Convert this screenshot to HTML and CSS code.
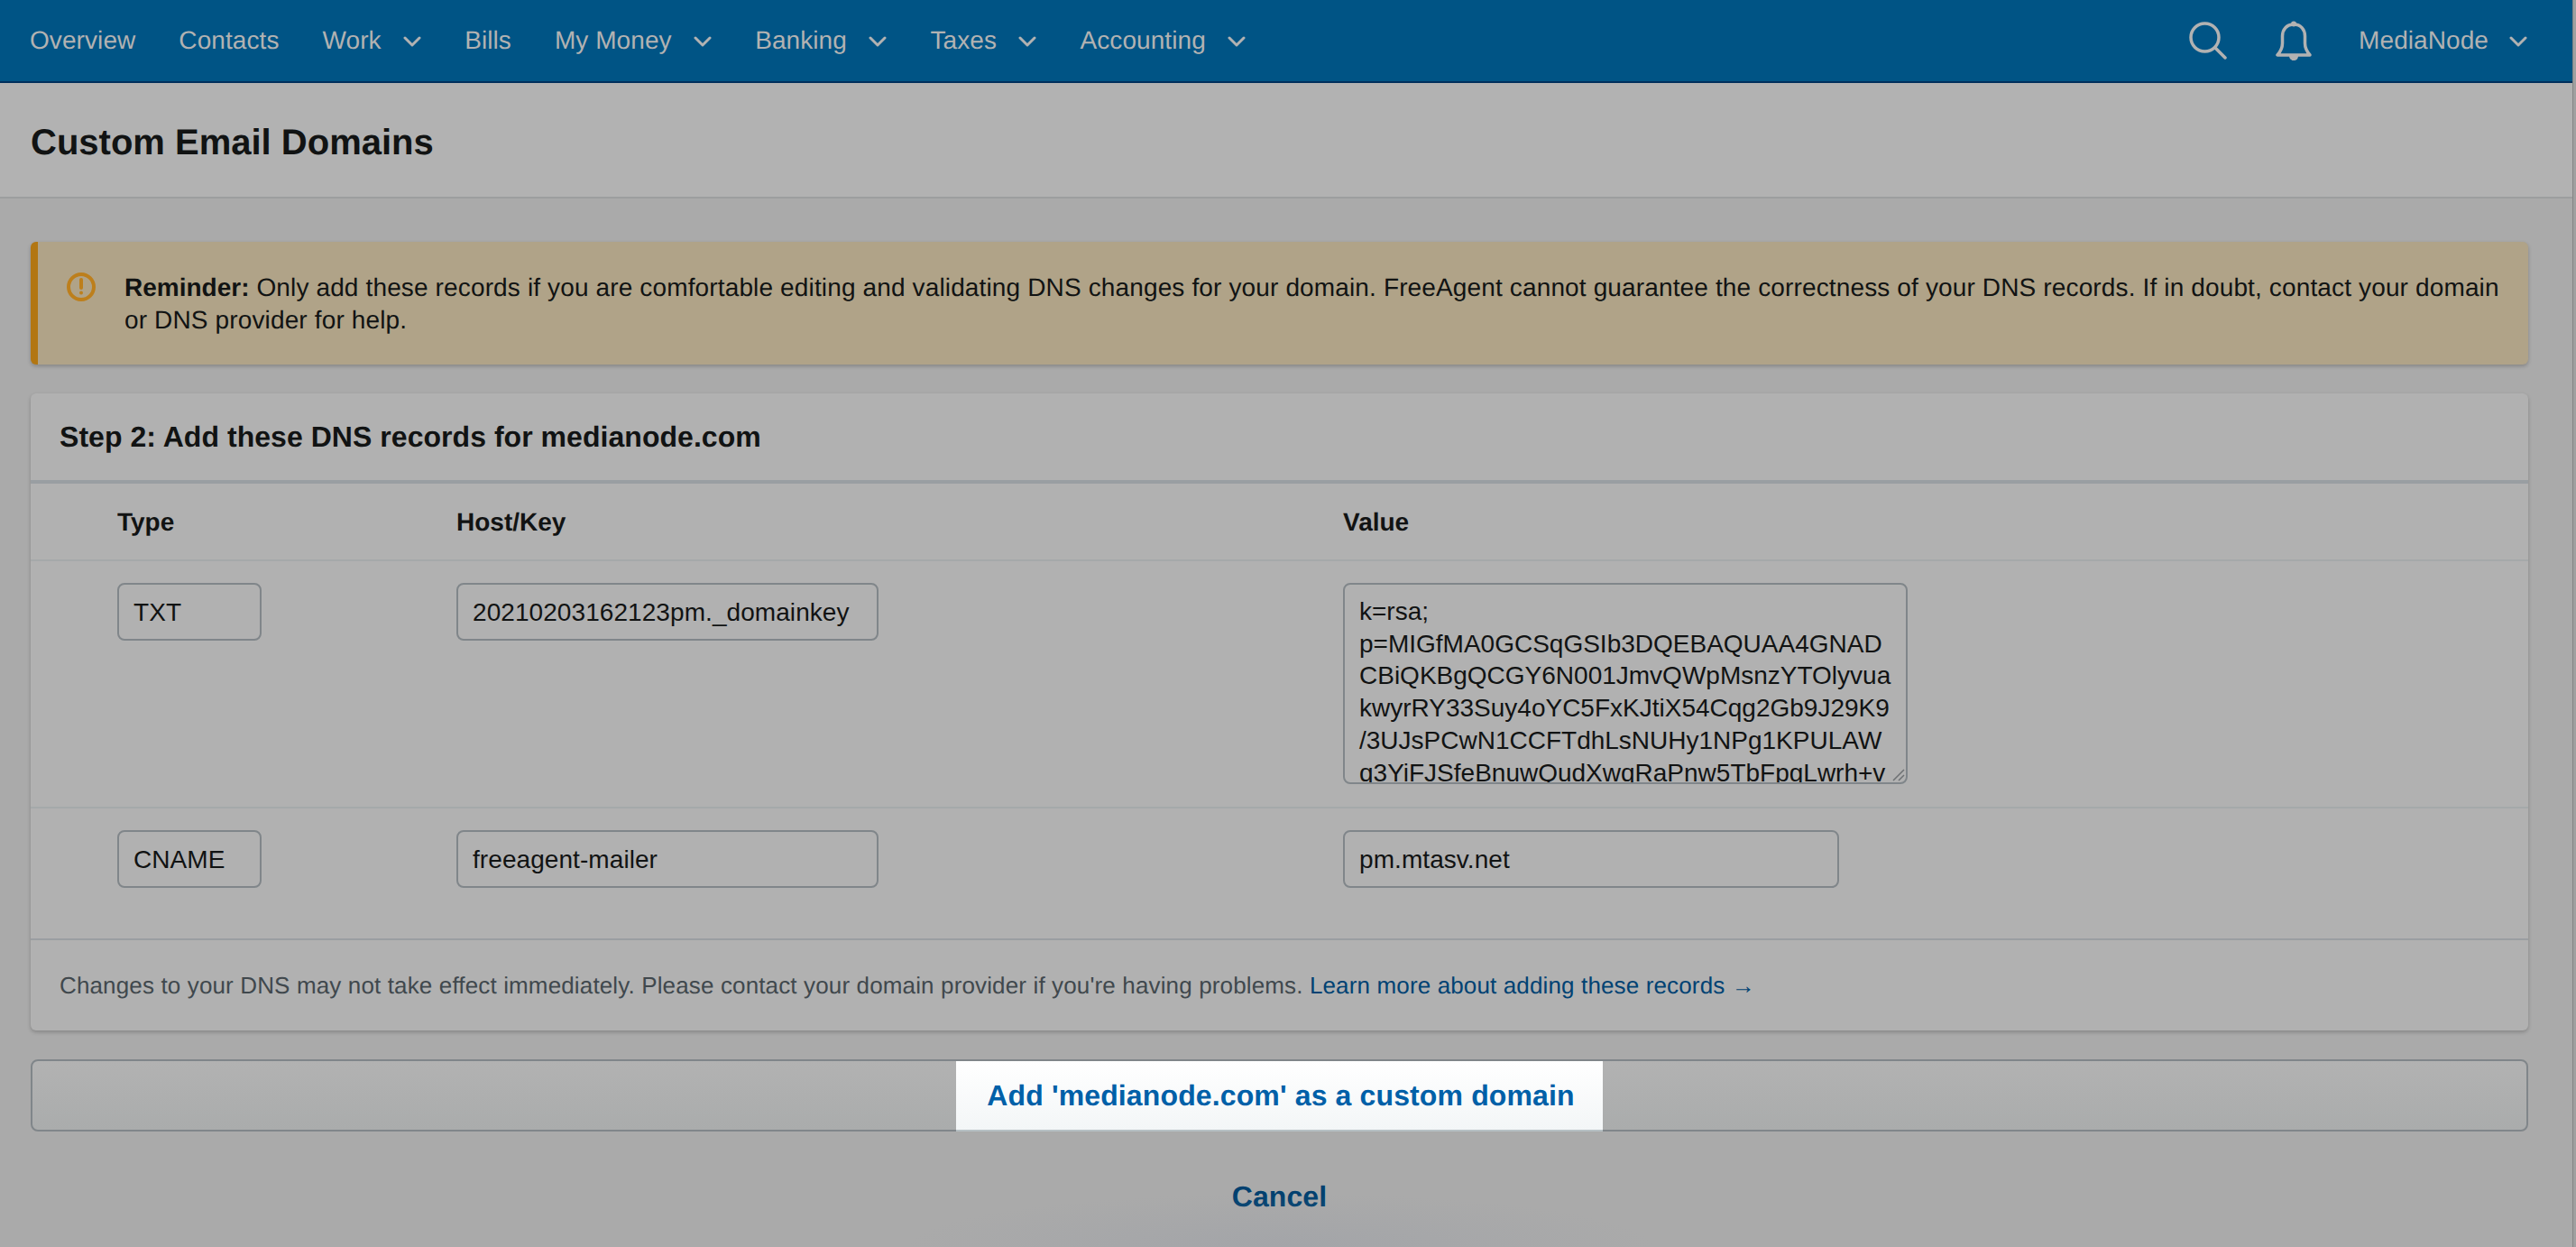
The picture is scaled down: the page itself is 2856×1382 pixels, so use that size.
FILE: index.html
```html
<!DOCTYPE html>
<html lang="en">
<head>
<meta charset="utf-8">
<title>Custom Email Domains</title>
<link rel="stylesheet" href="styles.css">
</head>
<body>
<div class="page">
  <nav class="nav">
    <a class="nav-link">Overview</a>
    <a class="nav-link">Contacts</a>
    <a class="nav-link">Work <svg class="chev" viewBox="0 0 20 12"><path d="M2 2l8 8 8-8"/></svg></a>
    <a class="nav-link">Bills</a>
    <a class="nav-link">My Money <svg class="chev" viewBox="0 0 20 12"><path d="M2 2l8 8 8-8"/></svg></a>
    <a class="nav-link">Banking <svg class="chev" viewBox="0 0 20 12"><path d="M2 2l8 8 8-8"/></svg></a>
    <a class="nav-link">Taxes <svg class="chev" viewBox="0 0 20 12"><path d="M2 2l8 8 8-8"/></svg></a>
    <a class="nav-link">Accounting <svg class="chev" viewBox="0 0 20 12"><path d="M2 2l8 8 8-8"/></svg></a>
    <div class="nav-right">
      <svg class="icon-search" viewBox="0 0 42 42"><circle cx="17.5" cy="17.5" r="15.5"/><path d="M29 29l11 11"/></svg>
      <svg class="icon-bell" viewBox="0 0 40 44"><path d="M20 4c-8 0-12.500 6-12.500 13v8c0 5-2 9-5.500 13h36c-3.500-4-5.500-8-5.500-13v-8C32.500 10 28 4 20 4z"/><circle class="fill" cx="20" cy="3.500" r="3"/><path class="fill" d="M15 39h10c0 3-2 5-5 5s-5-2-5-5z"/></svg>
      <a class="nav-link nav-user">MediaNode <svg class="chev" viewBox="0 0 20 12"><path d="M2 2l8 8 8-8"/></svg></a>
    </div>
  </nav>
  <header class="page-head"><h1 class="page-title">Custom Email Domains</h1></header>
  <main class="content">
    <section class="alert">
      <svg class="alert-icon" viewBox="0 0 32 32"><circle cx="16" cy="16" r="14"/><path d="M16 8v9"/><circle class="dot" cx="16" cy="22.500" r="2"/></svg>
      <p class="alert-text"><strong class="alert-lead">Reminder:</strong> Only add these records if you are comfortable editing and validating DNS changes for your domain. FreeAgent cannot guarantee the correctness of your DNS records. If in doubt, contact your domain or DNS provider for help.</p>
    </section>
    <section class="card">
      <h2 class="card-title">Step 2: Add these DNS records for medianode.com</h2>
      <div class="row row-head"><div>Type</div><div>Host/Key</div><div>Value</div></div>
      <div class="row row-txt">
        <div><input class="field field-type" readonly value="TXT"></div>
        <div><input class="field field-host" readonly value="20210203162123pm._domainkey"></div>
        <div class="area-wrap"><textarea class="field field-area" readonly>k=rsa;
p=MIGfMA0GCSqGSIb3DQEBAQUAA4GNAD
CBiQKBgQCGY6N001JmvQWpMsnzYTOlyvua
kwyrRY33Suy4oYC5FxKJtiX54Cqg2Gb9J29K9
/3UJsPCwN1CCFTdhLsNUHy1NPg1KPULAW
q3YiFJSfeBnuwQudXwqRaPnw5TbFpgLwrh+v</textarea><svg class="grip" viewBox="0 0 14 14"><path d="M1 13L13 1M7 13l6-6"/></svg></div>
      </div>
      <div class="row row-cname">
        <div><input class="field field-type" readonly value="CNAME"></div>
        <div><input class="field field-host" readonly value="freeagent-mailer"></div>
        <div><input class="field field-value" readonly value="pm.mtasv.net"></div>
      </div>
      <p class="card-foot">Changes to your DNS may not take effect immediately. Please contact your domain provider if you're having problems. <a class="foot-link">Learn more about adding these records →</a></p>
    </section>
    <div class="add-btn"><span class="add-label">Add 'medianode.com' as a custom domain</span></div>
    <a class="cancel">Cancel</a>
  </main>
</div>
<div class="edge"></div>
</body>
</html>
```
FILE: styles.css
```css
* { box-sizing: border-box; }
html, body { height: 100%; }
body {
  margin: 0;
  display: flex;
  overflow: hidden;
  background: #aaaaaa;
  font-family: "Liberation Sans", Arial, sans-serif;
  color: #111313;
  text-rendering: geometricPrecision;
}
.page { flex: 1; min-width: 0; position: relative; }
.page::after {
  content: "";
  position: absolute;
  left: 1000px;
  width: 840px;
  bottom: -60px;
  height: 120px;
  background: radial-gradient(ellipse at center, rgba(150,155,165,.35), rgba(150,155,165,0) 70%);
}
.edge { width: 4px; background: #a0a0a0; border-left: 1px solid #858585; }

.nav {
  height: 92px;
  display: flex;
  align-items: center;
  gap: 48px;
  padding: 0 50px 0 33px;
  background: #005485;
  border-bottom: 2px solid #002f5c;
}
.nav-link {
  display: flex;
  align-items: center;
  gap: 24.5px;
  font-size: 28px;
  letter-spacing: .08px;
  color: #b2b2b2;
  white-space: nowrap;
}
.nav-user { gap: 23px; }
.chev { width: 20px; height: 12px; margin-top: 2px; }
.chev path { fill: none; stroke: #b2b2b2; stroke-width: 3; stroke-linecap: round; stroke-linejoin: round; }
.nav-right { margin-left: auto; display: flex; align-items: center; }
.icon-search { width: 42px; height: 42px; margin-right: 54px; }
.icon-search circle, .icon-search path { fill: none; stroke: #b2b2b2; stroke-width: 3.500; stroke-linecap: round; }
.icon-bell { width: 40px; height: 44px; margin-right: 52px; }
.icon-bell path { fill: none; stroke: #b2b2b2; stroke-width: 3.500; stroke-linejoin: round; }
.icon-bell .fill { fill: #b2b2b2; stroke: none; }

.page-head {
  height: 128px;
  display: flex;
  align-items: center;
  padding: 6px 0 0 34px;
  background: #b2b2b2;
  border-bottom: 2px solid #9c9e9f;
}
.page-title { margin: 0; font-size: 40px; font-weight: 700; }

.content { padding: 48px 49px 0 34px; display: flex; flex-direction: column; }

.alert {
  display: flex;
  gap: 32px;
  padding: 33px 10px 31px 32px;
  background: #b0a388;
  border-left: 8px solid #b27612;
  border-radius: 6px;
  box-shadow: 0 2px 4px rgba(0,0,0,.22);
}
.alert-icon { width: 32px; height: 32px; flex: none; margin-top: 1px; }
.alert-icon circle, .alert-icon path { fill: none; stroke: #bd7f1c; stroke-width: 4; stroke-linecap: round; }
.alert-icon .dot { fill: #bd7f1c; stroke: none; }
.alert-text { margin: 0; font-size: 28px; line-height: 36px; letter-spacing: .14px; }
.alert-lead { letter-spacing: 0; }

.card {
  margin-top: 32px;
  background: #b1b1b1;
  border-radius: 6px;
  box-shadow: 0 2px 4px rgba(0,0,0,.22);
}
.card-title {
  margin: 0;
  height: 100px;
  padding: 2px 32px 2px;
  display: flex;
  align-items: center;
  font-size: 32px;
  font-weight: 700;
  letter-spacing: .04px;
  border-bottom: 4px solid #999ea2;
}
.row {
  display: grid;
  grid-template-columns: 376px 983px 1fr;
  padding-left: 96px;
  border-bottom: 2px solid #a5a9aa;
}
.row-head { height: 86px; align-items: center; font-size: 28px; font-weight: 700; padding-top: 1px; }
.row-txt { height: 274px; padding-top: 24px; }
.row-cname { height: 146px; padding-top: 24px; border-bottom-color: #9a9ea2; }

.field {
  display: block;
  height: 64px;
  padding: 2px 16px 0;
  margin: 0;
  background: #b1b1b1;
  border: 2px solid #80868a;
  border-radius: 8px;
  font: 28px "Liberation Sans", Arial, sans-serif;
  letter-spacing: .07px;
  color: #111313;
  outline: none;
}
.field-type { width: 160px; }
.field-host { width: 468px; }
.field-value { width: 550px; }
.area-wrap { position: relative; width: 626px; height: 223px; }
.field-area {
  width: 626px;
  height: 223px;
  padding: 12px 16px 0;
  line-height: 35.7px;
  letter-spacing: 0;
  white-space: pre;
  overflow: hidden;
  resize: none;
}
.grip { position: absolute; right: 3px; bottom: 3px; width: 14px; height: 14px; }
.grip path { fill: none; stroke: #6d7073; stroke-width: 1.500; }

.card-foot {
  margin: 0;
  height: 100px;
  padding: 0 32px;
  line-height: 100px;
  font-size: 26px;
  letter-spacing: .14px;
  color: #40484d;
}
.foot-link { color: #004273; }

.add-btn {
  margin-top: 32px;
  height: 80px;
  display: flex;
  justify-content: center;
  background: linear-gradient(#b2b2b2, #aaacac);
  border: 2px solid #80868a;
  border-radius: 8px;
}
.add-label {
  margin-bottom: -2px;
  padding: 0 31px 0 34px;
  display: flex;
  align-items: center;
  font-size: 32px;
  font-weight: 700;
  letter-spacing: .13px;
  color: #0060a8;
  background: linear-gradient(#ffffff, #f3f6f7);
  border-bottom: 2px solid #b6c0c4;
}
.cancel {
  margin-top: 54px;
  align-self: center;
  font-size: 32px;
  font-weight: 700;
  letter-spacing: .1px;
  color: #00406f;
}
```
